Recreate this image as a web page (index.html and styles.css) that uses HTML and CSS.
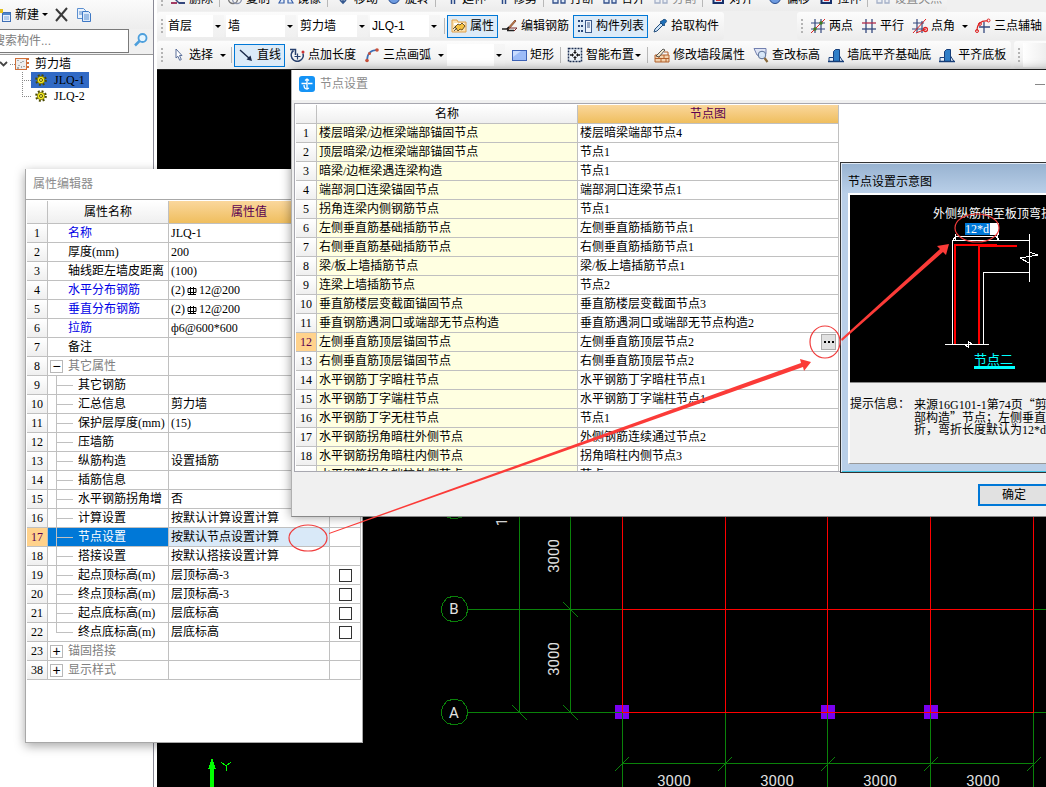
FILE: index.html
```html
<!DOCTYPE html>
<html lang="zh-CN">
<head>
<meta charset="utf-8">
<title>节点设置</title>
<link rel="stylesheet" href="styles.css">
</head>
<body>
<svg class="defs" aria-hidden="true">
  <symbol id="i-props" viewBox="0 0 16 16"><path d="M1 2h5l1 2h8v10H1z" fill="#fbe3b3" stroke="#e0a04a"/><path d="M3 5h10v2H3z" fill="#fff"/><path d="M4 9l3-3 2 1 2-2 3 3-3 4-2-1-2 2z" fill="#f5c242" stroke="#4a3510" stroke-width=".8"/><path d="M2 11l3-3M3 13l3-3" stroke="#333" stroke-width=".8"/></symbol>
  <symbol id="i-editbar" viewBox="0 0 16 16"><path d="M0 11h7M5 12.500h7" stroke="#222" stroke-width="1.400"/><path d="M5 11l8-9 1 1-7 8z" fill="#c98a4a" stroke="#6b2a1a" stroke-width=".7"/><path d="M5 11l2-2" stroke="#111" stroke-width="1.600"/><path d="M8 10h7l-3 3" stroke="#7b2a2a" fill="none"/></symbol>
  <symbol id="i-list" viewBox="0 0 16 16"><rect x="8.500" y="2.500" width="6" height="12" fill="#eef4fb" stroke="#3b5a8c"/><path d="M10 5h3M10 7h3M10 9h3" stroke="#3b5a8c"/><path d="M1 3h2M1 8h2M1 13h2M4 3h2M4 8h2M4 13h2" stroke="#2b4777" stroke-width="2"/></symbol>
  <symbol id="i-pick" viewBox="0 0 16 16"><path d="M2 14l1-3 6-6 2 2-6 6z" fill="#cfe4f7" stroke="#234e7c"/><path d="M8 4l4 4 1-1-1-1c3-2 3-3 2-4s-3-1-4 1L9 3z" fill="#1f6fb8" stroke="#0e3f70" stroke-width=".7"/></symbol>
  <symbol id="i-twopt" viewBox="0 0 16 16"><path d="M5 1v14M11 1v14M1 5h14M1 11h14" stroke="#35497e" stroke-width="1.200"/><path d="M1 15L15 1" stroke="#d22"/><circle cx="5" cy="11" r="1.700" fill="#3f7a1c"/><circle cx="11" cy="5" r="1.700" fill="#3f7a1c"/></symbol>
  <symbol id="i-para" viewBox="0 0 16 16"><path d="M5 1v14M11 1v14" stroke="#35497e" stroke-width="1.300"/><path d="M1 5h14" stroke="#b02a4a" stroke-width="1.300"/><path d="M1 11h14" stroke="#35497e" stroke-width="1.300"/></symbol>
  <symbol id="i-angle" viewBox="0 0 16 16"><path d="M5 1v14M10 3v12M1 5h11M0 11h11" stroke="#35497e" stroke-width="1.200"/><path d="M1 15L14 1M4 15l10-4" stroke="#d22" fill="none"/><circle cx="13.500" cy="11.500" r="2" fill="none" stroke="#d22" stroke-width="1.300"/></symbol>
  <symbol id="i-threeaxis" viewBox="0 0 16 16"><path d="M9 4v11M4 9h11" stroke="#35497e" stroke-width="1.300"/><path d="M2 13C2 6 6 2 13 3" stroke="#d22" fill="none" stroke-width="1.200"/><circle cx="2" cy="13" r="1.500" fill="none" stroke="#d22"/><circle cx="13.500" cy="2.500" r="1.500" fill="none" stroke="#d22"/><circle cx="5" cy="6" r="1.400" fill="none" stroke="#d22"/></symbol>
  <symbol id="i-cursor" viewBox="0 0 16 16"><path d="M6 2l6 6.500H9.500l1.800 4-1.600.8-1.800-4L6 11z" fill="#fff" stroke="#5a6f9a"/></symbol>
  <symbol id="i-line" viewBox="0 0 16 16"><path d="M2 3l10 9" stroke="#1c2b4a" stroke-width="1.400"/><path d="M14 14l-5.500-1.500 4-4z" fill="#1c2b4a"/></symbol>
  <symbol id="i-ptlen" viewBox="0 0 16 16"><path d="M4.500 3.500a6 6 0 1 0 9.500 3" fill="none" stroke="#27406e" stroke-width="1.600"/><path d="M1 2.500h5.500V8" fill="none" stroke="#27406e" stroke-width="1.500"/><path d="M5.500 9.500h6M8.500 6.500v6" stroke="#27406e" stroke-width="1.200"/><circle cx="14" cy="5" r="1.500" fill="#c33"/></symbol>
  <symbol id="i-arc" viewBox="0 0 16 16"><path d="M3 14C3 7 6 3 13 3" fill="none" stroke="#3b6fb5" stroke-width="1.600"/><circle cx="3" cy="13.500" r="1.800" fill="#c8503a"/><circle cx="5.500" cy="6.500" r="1.500" fill="#c8503a"/><circle cx="13" cy="3" r="1.800" fill="#c8503a"/></symbol>
  <symbol id="i-rect" viewBox="0 0 16 16"><rect x="1.500" y="3.500" width="14" height="10" fill="#9dbcf8" stroke="#3d63b8"/><path d="M2 4h8l-8 6z" fill="#c9dcff"/></symbol>
  <symbol id="i-smart" viewBox="0 0 16 16"><rect x="1.500" y="1.500" width="13" height="13" fill="#eef4fb" stroke="#1d2f52" stroke-width="1.500" stroke-dasharray="2 1"/><path d="M8 3v3M8 10v3M3 8h3M10 8h3" stroke="#111" stroke-width="1.300"/><path d="M6 5h4L8 7zM6 11h4L8 9zM5 6v4l2-2zM11 6v4L9 8z" fill="#111"/></symbol>
  <symbol id="i-wall" viewBox="0 0 16 16"><path d="M1 8h14v7H1z" fill="#f5d3ae" stroke="#b4622d"/><path d="M1 11.500h14M5 8v3.500M10 8v3.500M7 11.500V15M12 11.500V15" stroke="#b4622d"/><path d="M2 9l7-7 2 1-6 7z" fill="#f2e8d0" stroke="#333" stroke-width=".8"/><path d="M10 5h4v3" fill="none" stroke="#b4622d"/></symbol>
  <symbol id="i-check" viewBox="0 0 16 16"><path d="M1 1.500h12v5L10 10 4 8z" fill="#dfe5f5" stroke="#7280b0"/><circle cx="9" cy="8" r="3.800" fill="#d7e8f8" fill-opacity=".9" stroke="#5a6f95"/><path d="M11.500 11l3 4" stroke="#8a6a3a" stroke-width="2.200"/></symbol>
  <symbol id="i-base" viewBox="0 0 16 16"><path d="M5.500 4.500l2-2h4v12h-6z" fill="#2f7fc8" stroke="#173f7a"/><path d="M1 10.500h4.500v4H1zM11.500 9l3.500 5.500h-3.500z" fill="#e8f1fb" stroke="#173f7a"/><path d="M0 14.500h16" stroke="#173f7a" stroke-width="1.500"/></symbol>
  <symbol id="i-gear" viewBox="0 0 16 16"><circle cx="8" cy="8" r="6.300" fill="none" stroke="#4b4b00" stroke-width="3" stroke-dasharray="2.500 2.450"/><circle cx="8" cy="8" r="5" fill="#f8ec20" stroke="#4b4b00" stroke-width=".8"/><circle cx="8" cy="8" r="2" fill="#fff76a" stroke="#4b4b00" stroke-width="1.200"/></symbol>
  <symbol id="i-gen" viewBox="0 0 16 16"><path d="M2 4v8h5V4M10 4v8h4V4" fill="#dfe9f7" stroke="#33508a" stroke-width="1.300"/></symbol>
  <symbol id="i-del" viewBox="0 0 16 16"><path d="M1 11h6v2H1z" fill="#a33b62"/><path d="M6 8l3 3h6v2H9L5 9z" fill="#34467c"/></symbol>
  <symbol id="i-round" viewBox="0 0 16 16"><circle cx="8" cy="7" r="5.500" fill="#6e9be0" stroke="#274b8d"/></symbol>
  <symbol id="i-ring" viewBox="0 0 16 16"><circle cx="6" cy="8" r="4.500" fill="none" stroke="#777" stroke-width="1.300"/><circle cx="10" cy="8" r="4.500" fill="none" stroke="#8a93ad" stroke-width="1.300"/></symbol>
  <symbol id="i-mirror" viewBox="0 0 16 16"><path d="M6 3v9H1zM10 3v9h5z" fill="#e7effb" stroke="#3b62aa" stroke-width="1.200"/></symbol>
  <symbol id="i-move" viewBox="0 0 16 16"><path d="M8 2v11M5 9l3 3 3-3" fill="none" stroke="#34588f" stroke-width="1.600"/></symbol>
  <symbol id="i-bars" viewBox="0 0 16 16"><path d="M8.500 2v11M11.500 2v11" stroke="#2a4a88" stroke-width="1.500"/></symbol>
  <symbol id="i-align" viewBox="0 0 16 16"><path d="M3.500 2v10H13V2" fill="#dbe6f6" stroke="#16306b" stroke-width="2"/><path d="M6 9h5" stroke="#c33" stroke-width="2"/></symbol>
</svg>

<div class="app">
  <aside class="side">
    <div class="side-tools">
      <button class="side-btn"><svg class="new-ico" viewBox="0 0 12 16"><rect x="2.500" y="5.500" width="8" height="9" fill="#e5effb" stroke="#3f6fb5"/><path d="M3 6h7v2H3z" fill="#4d85cc"/><path d="M4 10h5M4 12h5" stroke="#7ea6da"/><path d="M0 2h3v4H0z" fill="#e4c21c"/></svg>新建<i class="tri"></i></button>
      <button class="side-btn" aria-label="删除"><svg viewBox="0 0 16 16" class="ico"><path d="M2 2l11 12M13 1L2 14" stroke="#3a3a3a" stroke-width="2"/></svg></button>
      <button class="side-btn" aria-label="复制"><svg viewBox="0 0 16 16" class="ico"><path d="M1.500 1.500h6l2 2v8h-8z" fill="#eaf2fc" stroke="#5b8fd0"/><path d="M6.500 4.500h6l2 2v8h-8z" fill="#dceafb" stroke="#3e78c4"/><path d="M8 8h5M8 10h5M8 12h5M3 5h3M3 7h3" stroke="#5b8fd0"/></svg></button>
    </div>
    <div class="search">
      <input type="text" placeholder="搜索构件..." aria-label="搜索构件">
      <button aria-label="搜索"><svg viewBox="0 0 16 16" class="ico"><circle cx="9.500" cy="6" r="4" fill="#e5f5ff" stroke="#4d9fdc" stroke-width="1.800"/><path d="M6.500 9L2 13.500" stroke="#4d9fdc" stroke-width="2.500"/></svg></button>
    </div>
    <ul class="tree">
      <li class="root"><svg class="root-ico" viewBox="0 0 30 16"><path d="M0 6l3.500 3.500L7 6" fill="none" stroke="#444" stroke-width="1.800"/><path d="M10 8.500h5" stroke="#888" stroke-dasharray="1 1"/><rect x="15.500" y="2.500" width="11" height="11" fill="#eee" stroke="#d0703a"/><path d="M18 4v1M21 6v1M19 9v1M23 5v1M24 10v1M17 12h2M21 11h1" stroke="#666"/><path d="M28 2v12" stroke="#d0703a" stroke-width="2" stroke-dasharray="2 2"/></svg>剪力墙</li>
      <li class="leaf"><span class="leaf-tag on"><svg class="leaf-ico" viewBox="0 0 16 16"><use href="#i-gear"/></svg>JLQ-1</span></li>
      <li class="leaf last"><span class="leaf-tag"><svg class="leaf-ico" viewBox="0 0 16 16"><use href="#i-gear"/></svg>JLQ-2</span></li>
    </ul>
  </aside>

  <main class="main">
    <div class="bars">
      <div class="bar-row cut">
        <div class="bar"><i class="grip"></i>
          <button class="tb"><svg class="ico"><use href="#i-del"/></svg>删除</button><i class="sep"></i>
          <button class="tb"><svg class="ico"><use href="#i-ring"/></svg>复制</button>
          <button class="tb"><svg class="ico"><use href="#i-mirror"/></svg>镜像</button><i class="sep"></i>
          <button class="tb"><svg class="ico"><use href="#i-move"/></svg>移动</button>
          <button class="tb"><svg class="ico"><use href="#i-round"/></svg>旋转</button><i class="sep"></i>
          <button class="tb"><svg class="ico"><use href="#i-bars"/></svg>延伸</button>
          <button class="tb"><svg class="ico"><use href="#i-bars"/></svg>修剪</button><i class="sep"></i>
          <button class="tb"><svg class="ico"><use href="#i-gen"/></svg>打断</button>
          <button class="tb"><svg class="ico"><use href="#i-gen"/></svg>合并</button>
          <button class="tb off"><svg class="ico"><use href="#i-gen"/></svg>分割</button><i class="sep"></i>
          <button class="tb"><svg class="ico"><use href="#i-align"/></svg>对齐</button><i class="sep none"></i>
          <button class="tb"><svg class="ico"><use href="#i-round"/></svg>偏移</button>
          <button class="tb"><svg class="ico"><use href="#i-align"/></svg>拉伸</button><i class="sep"></i>
          <button class="tb off"><svg class="ico"><use href="#i-gen"/></svg>设置夹点</button>
        </div>
      </div>
      <div class="bar-row">
        <div class="bar"><i class="grip"></i>
          <span class="combo small"><select aria-label="楼层"><option>首层</option></select></span>
          <span class="combo"><select aria-label="构件类型"><option>墙</option></select></span>
          <span class="combo"><select aria-label="构件"><option>剪力墙</option></select></span>
          <span class="combo"><select aria-label="构件名称"><option>JLQ-1</option></select></span>
          <i class="sep"></i>
          <button class="tb on"><svg class="ico"><use href="#i-props"/></svg>属性</button>
          <button class="tb"><svg class="ico"><use href="#i-editbar"/></svg>编辑钢筋</button>
          <button class="tb on"><svg class="ico"><use href="#i-list"/></svg>构件列表</button>
          <button class="tb"><svg class="ico"><use href="#i-pick"/></svg>拾取构件</button>
        </div>
        <div class="bar axis"><i class="grip"></i>
          <button class="tb"><svg class="ico"><use href="#i-twopt"/></svg>两点</button>
          <button class="tb"><svg class="ico"><use href="#i-para"/></svg>平行</button>
          <button class="tb"><svg class="ico"><use href="#i-angle"/></svg>点角</button><i class="drop"></i>
          <button class="tb"><svg class="ico"><use href="#i-threeaxis"/></svg>三点辅轴</button>
        </div>
      </div>
      <div class="bar-row">
        <div class="bar"><i class="grip"></i>
          <button class="tb"><svg class="ico"><use href="#i-cursor"/></svg>选择</button><i class="drop"></i><i class="sep"></i>
          <button class="tb on"><svg class="ico"><use href="#i-line"/></svg>直线</button>
          <button class="tb"><svg class="ico"><use href="#i-ptlen"/></svg>点加长度</button>
          <button class="tb"><svg class="ico"><use href="#i-arc"/></svg>三点画弧</button><i class="drop"></i>
          <span class="combo small"><select aria-label="画弧方式"><option></option></select></span>
          <button class="tb"><svg class="ico"><use href="#i-rect"/></svg>矩形</button><i class="sep"></i>
          <button class="tb"><svg class="ico"><use href="#i-smart"/></svg>智能布置<i class="tri"></i></button><i class="sep"></i>
          <button class="tb"><svg class="ico"><use href="#i-wall"/></svg>修改墙段属性</button>
          <button class="tb"><svg class="ico"><use href="#i-check"/></svg>查改标高</button>
          <button class="tb"><svg class="ico"><use href="#i-base"/></svg>墙底平齐基础底</button>
          <button class="tb"><svg class="ico"><use href="#i-base"/></svg>平齐底板</button>
        </div>
        <div class="bar tail"><i class="grip"></i><span class="blank"></span></div>
      </div>
    </div>
    <svg class="cad" role="img" aria-label="轴网平面">
      <g transform="translate(-157 -70)" shape-rendering="crispEdges" fill="none">
        <g fill="#7a00f0"><rect x="615" y="705" width="14" height="14"/><rect x="821" y="705" width="14" height="14"/><rect x="924" y="705" width="14" height="14"/></g>
        <g stroke="#0a820a">
          <path d="M519.500 500V712M570.500 500V712M467 609.500H622M467 712.500H622M1033 609.500H1200M1033 712.500H1200"/>
          <path d="M622.500 712V900M725.500 712V900M827.500 712V900M930.500 712V900M1033.500 712V900M622 763.500H1034"/>
          <path d="M563 602l15 15M563 705l15 15M512 705l15 15M615 771l14-14M718 771l14-14M821 771l14-14M924 771l14-14M1027 771l14-14"/>
          <path id="bub" d="M454 596l8 2 4 5 2 6-2 7-4 4-8 2-7-2-4-4-2-7 2-6 4-5z"/>
          <use href="#bub" y="103"/><use href="#bub" y="-103"/>
        </g>
        <path stroke="#f00" d="M622.500 500V712M725.500 500V712M827.500 500V712M930.500 500V712M1033.500 500V712M622 609.500H1034M622 712.500H1034"/>
        <path d="M212 758l4 11h-2v131h-4V769h-2z" fill="#0f0"/>
        <path d="M221 762l5 4 5-4M226 766v5" stroke="#0f0"/>
        <g class="cad-text">
          <text x="454" y="614">B</text><text x="454" y="718">A</text>
          <text x="674" y="786">3000</text><text x="777" y="786">3000</text><text x="880" y="786">3000</text><text x="983" y="786">3000</text>
          <text transform="translate(559 556) rotate(-90)">3000</text>
          <text transform="translate(559 659) rotate(-90)">3000</text>
          <text transform="translate(507 522) rotate(-90)">1</text>
        </g>
      </g>
    </svg>
  </main>

  <section class="win props">
    <h2 class="win-title">属性编辑器</h2>
    <div class="props-body">
      <table class="grid">
        <colgroup><col class="c-no"><col class="c-name"><col class="c-val"><col class="c-chk"></colgroup>
        <thead><tr><th></th><th>属性名称</th><th class="hot">属性值</th><th></th></tr></thead>
        <tbody>
          <tr><th>1</th><td class="n link">名称</td><td>JLQ-1</td><td></td></tr>
          <tr><th>2</th><td class="n">厚度(mm)</td><td>200</td><td></td></tr>
          <tr><th>3</th><td class="n">轴线距左墙皮距离</td><td>(100)</td><td></td></tr>
          <tr><th>4</th><td class="n link">水平分布钢筋</td><td>(2)<svg class="rebar" viewBox="0 0 12 12"><path d="M2 3.500h8v4H2zM4.500 2v8M7.500 2v8M2 9.500h8" fill="none" stroke="#000"/></svg>12@200</td><td></td></tr>
          <tr><th>5</th><td class="n link">垂直分布钢筋</td><td>(2)<svg class="rebar" viewBox="0 0 12 12"><path d="M2 3.500h8v4H2zM4.500 2v8M7.500 2v8M2 9.500h8" fill="none" stroke="#000"/></svg>12@200</td><td></td></tr>
          <tr><th>6</th><td class="n link">拉筋</td><td>ф6@600*600</td><td></td></tr>
          <tr><th>7</th><td class="n">备注</td><td></td><td></td></tr>
          <tr><th>8</th><td class="n group"><button class="exp" aria-label="折叠">−</button>其它属性</td><td></td><td></td></tr>
          <tr><th>9</th><td class="n sub">其它钢筋</td><td></td><td></td></tr>
          <tr><th>10</th><td class="n sub">汇总信息</td><td>剪力墙</td><td></td></tr>
          <tr><th>11</th><td class="n sub">保护层厚度(mm)</td><td>(15)</td><td></td></tr>
          <tr><th>12</th><td class="n sub">压墙筋</td><td></td><td></td></tr>
          <tr><th>13</th><td class="n sub">纵筋构造</td><td>设置插筋</td><td></td></tr>
          <tr><th>14</th><td class="n sub">插筋信息</td><td></td><td></td></tr>
          <tr><th>15</th><td class="n sub">水平钢筋拐角增</td><td>否</td><td></td></tr>
          <tr><th>16</th><td class="n sub">计算设置</td><td>按默认计算设置计算</td><td></td></tr>
          <tr class="sel"><th>17</th><td class="n sub">节点设置</td><td>按默认节点设置计算</td><td></td></tr>
          <tr><th>18</th><td class="n sub">搭接设置</td><td>按默认搭接设置计算</td><td></td></tr>
          <tr><th>19</th><td class="n sub">起点顶标高(m)</td><td>层顶标高-3</td><td class="chk"><input type="checkbox" aria-label="起点顶标高"></td></tr>
          <tr><th>20</th><td class="n sub">终点顶标高(m)</td><td>层顶标高-3</td><td class="chk"><input type="checkbox" aria-label="终点顶标高"></td></tr>
          <tr><th>21</th><td class="n sub">起点底标高(m)</td><td>层底标高</td><td class="chk"><input type="checkbox" aria-label="起点底标高"></td></tr>
          <tr><th>22</th><td class="n sub end">终点底标高(m)</td><td>层底标高</td><td class="chk"><input type="checkbox" aria-label="终点底标高"></td></tr>
          <tr><th>23</th><td class="n group"><button class="exp" aria-label="展开">+</button>锚固搭接</td><td></td><td></td></tr>
          <tr><th>38</th><td class="n group"><button class="exp" aria-label="展开">+</button>显示样式</td><td></td><td></td></tr>
        </tbody>
      </table>
    </div>
  </section>

  <section class="win dialog">
    <header class="dialog-head">
      <svg class="ico" viewBox="0 0 16 16"><rect width="16" height="16" rx="3" fill="#1593f5"/><path d="M2.500 7.500h5M9 7.500h4.500M8 3v10M6 4.500L8 3l2 1.500M5 9c0 3 1.500 4 3 4l2-1" fill="none" stroke="#fff" stroke-width="1.300"/></svg>
      <h2 class="win-title">节点设置</h2>
      <button class="min" aria-label="最小化"></button>
    </header>
    <div class="dialog-body">
      <div class="nodes">
        <table class="grid">
          <colgroup><col class="c-no"><col class="c-half"><col class="c-half"></colgroup>
          <thead><tr><th></th><th>名称</th><th class="hot">节点图</th></tr></thead>
          <tbody>
            <tr><th>1</th><td class="y">楼层暗梁/边框梁端部锚固节点</td><td>楼层暗梁端部节点4</td></tr>
            <tr><th>2</th><td class="y">顶层暗梁/边框梁端部锚固节点</td><td>节点1</td></tr>
            <tr><th>3</th><td class="y">暗梁/边框梁遇连梁构造</td><td>节点1</td></tr>
            <tr><th>4</th><td class="y">端部洞口连梁锚固节点</td><td>端部洞口连梁节点1</td></tr>
            <tr><th>5</th><td class="y">拐角连梁内侧钢筋节点</td><td>节点1</td></tr>
            <tr><th>6</th><td class="y">左侧垂直筋基础插筋节点</td><td>左侧垂直筋插筋节点1</td></tr>
            <tr><th>7</th><td class="y">右侧垂直筋基础插筋节点</td><td>右侧垂直筋插筋节点1</td></tr>
            <tr><th>8</th><td class="y">梁/板上墙插筋节点</td><td>梁/板上墙插筋节点1</td></tr>
            <tr><th>9</th><td class="y">连梁上墙插筋节点</td><td>节点2</td></tr>
            <tr><th>10</th><td class="y">垂直筋楼层变截面锚固节点</td><td>垂直筋楼层变截面节点3</td></tr>
            <tr><th>11</th><td class="y">垂直钢筋遇洞口或端部无节点构造</td><td>垂直筋遇洞口或端部无节点构造2</td></tr>
            <tr class="cur"><th>12</th><td class="y">左侧垂直筋顶层锚固节点</td><td><div class="pick">左侧垂直筋顶层节点2<button class="more" aria-label="选择节点图"><i></i><i></i><i></i></button></div></td></tr>
            <tr><th>13</th><td class="y">右侧垂直筋顶层锚固节点</td><td>右侧垂直筋顶层节点2</td></tr>
            <tr><th>14</th><td class="y">水平钢筋丁字暗柱节点</td><td>水平钢筋丁字暗柱节点1</td></tr>
            <tr><th>15</th><td class="y">水平钢筋丁字端柱节点</td><td>水平钢筋丁字端柱节点1</td></tr>
            <tr><th>16</th><td class="y">水平钢筋丁字无柱节点</td><td>节点1</td></tr>
            <tr><th>17</th><td class="y">水平钢筋拐角暗柱外侧节点</td><td>外侧钢筋连续通过节点2</td></tr>
            <tr><th>18</th><td class="y">水平钢筋拐角暗柱内侧节点</td><td>拐角暗柱内侧节点3</td></tr>
            <tr><th></th><td class="y">水平钢筋拐角端柱外侧节点</td><td>节点3</td></tr>
          </tbody>
        </table>
      </div>
      <footer class="dialog-foot"><button class="ok">确定</button></footer>
    </div>

    <section class="preview">
      <h3 class="preview-title">节点设置示意图</h3>
      <div class="preview-in">
        <div class="draw">
          <svg class="draw-svg" role="img" aria-label="节点二">
            <g transform="translate(-850 -195)" fill="none" stroke="#fff" shape-rendering="crispEdges">
              <path d="M952.500 344V240.500H1029.500M1029.500 234v48M983.500 344V272.500H1029M945 344.500h44M955.500 234v6M997.500 234v6M955 236.500h42M953 240l3-4M999 240l-3-4"/>
              <path d="M1029 252l9 3-18 3 9 5M964 344l4 3v-6l4 3"/>
              <path d="M955 344V245H997M979 344V246H1017" stroke="#f00" stroke-width="2"/>
              <path d="M974 367.500h41" stroke="#0ff" stroke-width="3"/>
              <text class="draw-cap" x="933" y="218">外侧纵筋伸至板顶弯折</text>
              <text class="draw-name" x="974" y="364">节点二</text>
            </g>
          </svg>
          <input class="len" type="text" value="12*d" aria-label="弯折长度">
        </div>
        <dl class="tip"><dt>提示信息：</dt><dd>来源16G101-1第74页<span class="wide">“</span>剪<br>部构造<span class="wide">”</span>节点；左侧垂直<br>折，弯折长度默认为12*d</dd></dl>
      </div>
    </section>
  </section>

  <svg class="marks" aria-hidden="true">
    <g fill="none" stroke="#f03c3c" stroke-width="1.200"><ellipse cx="308" cy="538" rx="19" ry="13"/><ellipse cx="825" cy="342" rx="15" ry="16"/><ellipse cx="977" cy="228" rx="22" ry="14"/></g>
    <path fill="#fb3b38" d="M329 533L801 363l-1-4 11 3-7 9-1-4L329 534z"/>
    <path fill="#fb3b38" d="M841 339L940 249l-3-3 12-2-3 11-3-3L842 341z"/>
  </svg>
</div>
</body>
</html>
```
FILE: styles.css
```css
* { box-sizing: border-box; }

body {
  margin: 0;
  font: 12px/16px "Liberation Sans", "Noto Sans CJK SC", sans-serif;
  color: #000;
}

button, input, select {
  margin: 0;
  padding: 0;
  border: 0;
  background: none;
  font: inherit;
  color: inherit;
}

h2, h3, ul, dl, dd { margin: 0; padding: 0; }

.defs { position: absolute; width: 0; height: 0; }
.ico { width: 16px; height: 16px; flex: none; }

.app {
  position: relative;
  display: flex;
  height: 100vh;
  overflow: hidden;
  background: #fff;
}

/* component list */
.side {
  display: flex;
  flex-direction: column;
  flex: none;
  width: 154px;
  border-right: 1px solid #8a8a96;
}

.side-tools {
  display: flex;
  align-items: center;
  gap: 6px;
  height: 29px;
  background: linear-gradient(#fbfbfb, #ededed);
}

.side-btn { display: flex; align-items: center; gap: 3px; }
.new-ico { width: 12px; height: 16px; }

.tri {
  width: 0;
  height: 0;
  border: 3px solid transparent;
  border-top-color: #000;
  border-bottom: 0;
}

.search { display: flex; height: 25px; background: #f0f0f0; }

.search input {
  width: 137px;
  height: 24px;
  margin-left: -8px;
  border: 1px solid #7a7a7a;
  background: #fff;
  outline: 0;
}

.search input::placeholder { color: #808080; opacity: 1; }
.search button { padding: 0 4px; }

.tree {
  flex: 1;
  padding-top: 1px;
  border-top: 1px solid #999;
  background: #fff;
  list-style: none;
}

.tree li { display: flex; height: 16px; }
.root-ico { width: 30px; height: 16px; margin-right: 5px; }

.leaf {
  position: relative;
  padding-left: 31px;
  font-family: "Liberation Serif", "Noto Sans CJK SC", serif;
}

.leaf::before {
  content: "";
  position: absolute;
  left: 22px;
  top: 0;
  width: 8px;
  height: 8px;
  border: 1px dotted #888;
  border-width: 0 0 1px 1px;
}

.leaf.last::before { top: -8px; height: 16px; }
.leaf-tag { display: flex; align-items: center; gap: 7px; padding: 0 4px; }
.leaf-tag.on { background: #316ac5; }
.leaf-ico { width: 12px; height: 12px; }

/* toolbars */
.main {
  display: flex;
  flex-direction: column;
  flex: 1;
  min-width: 0;
  margin-left: 3px;
}

.bars { background: #f0f0f0; border-bottom: 1px solid #222; }

.bar-row {
  display: flex;
  gap: 3px;
  height: 29px;
  overflow: hidden;
  white-space: nowrap;
}

.bar-row:last-child { height: 28px; }
.bar-row.cut { height: 12px; padding-bottom: 1px; align-items: flex-end; }

.bar {
  display: flex;
  flex: none;
  align-items: center;
  height: 28px;
  padding: 0 1px 0 4px;
  border-radius: 3px;
  background: linear-gradient(#fcfcfc, #ececec);
}

.cut .bar { height: 24px; }
.axis { margin-left: 70px; }

.grip {
  width: 2px;
  height: 15px;
  margin-right: 3px;
  background: repeating-linear-gradient(#b4b4b4 0 2px, transparent 2px 4px);
}

.sep {
  width: 1px;
  height: 16px;
  margin: 0 2px;
  background: #b8b8b8;
}

.cut .sep { margin: 0 3px 0 2px; }
.sep.none { background: none; }

.tb {
  display: flex;
  align-items: center;
  gap: 3px;
  height: 23px;
  padding: 0 3px;
  border: 1px solid transparent;
}

.tb .tri { margin-left: -2px; }
.tb.on { border-color: #0078d7; background: #dcebf8; }
.tb.off { color: #8a8a8a; }
.tb.off .ico { opacity: 0.4; }

.drop { display: flex; justify-content: center; width: 12px; }
.drop::before {
  content: "";
  border: 3px solid transparent;
  border-top-color: #000;
  border-bottom: 0;
}

.combo { position: relative; width: 70px; height: 22px; margin-right: 2px; background: #fff; }
.combo.small { width: 58px; }

.combo select {
  width: 100%;
  height: 100%;
  padding: 0 2px;
  appearance: none;
  background: linear-gradient(#f6f6f6, #f0f0f0) right / 11px 100% no-repeat;
}

.combo::after {
  content: "";
  position: absolute;
  right: 3px;
  top: 10px;
  border: 3px solid transparent;
  border-top-color: #000;
  border-bottom: 0;
}

.blank { width: 24px; height: 24px; background: linear-gradient(90deg, #fff, #eee); }

/* drawing area */
.cad { flex: 1; width: 100%; min-height: 0; background: #000; }

.cad-text {
  fill: #e2e2e2;
  font: 15px Roboto, sans-serif;
  text-anchor: middle;
}

/* floating windows */
.win { position: absolute; background: #fff; }
.win-title { font-size: 12px; font-weight: 400; color: #8c8c8c; }

.grid {
  table-layout: fixed;
  border-collapse: separate;
  border-spacing: 0;
  font: 12px/18px "Liberation Serif", "Noto Sans CJK SC", serif;
}

.grid th, .grid td {
  height: 19px;
  padding: 0 2px;
  border: 1px solid #c0c0c0;
  border-width: 0 1px 1px 0;
  overflow: hidden;
  white-space: nowrap;
  text-align: left;
  font-weight: 400;
}

.grid th {
  padding: 0;
  text-align: center;
  background: linear-gradient(#fff, #efefef);
}

.grid th.hot { color: #5a0050; background: linear-gradient(#fad79c, #efbe5e); }
.c-no { width: 21px; }

.props {
  left: 25px;
  top: 169px;
  width: 338px;
  height: 574px;
  border: 1px solid #a8a8a8;
  border-top: 0;
  box-shadow: 0 3px 10px rgba(0, 0, 0, 0.35);
}

.props .win-title { height: 30px; padding: 7px; }
.props-body { padding: 1px 0 0 1px; border-top: 1px solid #a8a8a8; }
.props .grid { width: 334px; }
.props thead th { height: 23px; }
.c-name { width: 121px; }
.c-val { width: 161px; }

.grid .n { position: relative; padding-left: 20px; }
.grid .link { color: #0000e6; }
.grid .group { color: #808080; }
.grid .n.sub { padding-left: 30px; }

.sub::before, .sub::after {
  content: "";
  position: absolute;
  left: 8px;
  top: 0;
  background: #c0c0c0;
}

.sub::before { width: 1px; height: 19px; }
.sub::after { top: 9px; width: 17px; height: 1px; }
.sub.end::before { height: 9px; }

.exp {
  position: absolute;
  left: 2px;
  top: 3px;
  width: 13px;
  height: 13px;
  border: 1px solid #b8b8b8;
  font: 14px/11px "Liberation Sans", sans-serif;
  color: #000;
}

.grid .sel th, .grid .cur th { color: #5a0050; background: #ffd28c; }
.grid .sel td { background: #d9e9f8; }
.grid .sel .n { color: #fff; background: #0078d7; }
.grid .sel td:last-child { background: #fff; }

.grid .chk { padding: 0; text-align: center; line-height: 0; }
.chk input { width: 13px; height: 13px; border: 1px solid #333; appearance: none; }
.rebar { width: 12px; height: 12px; margin: 0 1px; vertical-align: -3px; }

.dialog {
  left: 291px;
  right: -60px;
  top: 70px;
  border-bottom: 1px solid #888;
  border-left: 1px solid #b0b0b0;
  background: #f0f0f0;
  box-shadow: 0 0 10px rgba(0, 0, 0, 0.4);
}

.dialog-head {
  display: flex;
  align-items: center;
  gap: 5px;
  height: 30px;
  padding: 0 61px 2px 7px;
  background: #fff;
}

.min { width: 10px; height: 1px; margin-left: auto; background: #888; }
.dialog-body { padding: 3px 0 0 2px; }

.nodes {
  height: 369px;
  padding: 1px 0 0 1px;
  border: 1px solid #a8a8b0;
  background: #fff;
  overflow: hidden;
}

.nodes .grid { width: 543px; }
.c-half { width: 261px; }
.grid .y { background: #ffffe1; }
.pick { display: flex; justify-content: space-between; height: 18px; }

.more {
  display: flex;
  align-items: center;
  justify-content: center;
  gap: 2px;
  width: 15px;
  height: 16px;
  margin-top: 1px;
  border: 1px solid #adadad;
  background: #e1e1e1;
}

.more i { width: 2px; height: 2px; background: #000; }

.dialog-foot { display: flex; justify-content: flex-end; padding: 12px 56px 10px; }
.ok { width: 72px; height: 22px; border: 2px solid #0078d7; background: #e1e1e1; }

.preview {
  position: absolute;
  left: 548px;
  right: 0;
  top: 92px;
  padding: 1px 1px 8px 7px;
  border: 1px solid #333;
  box-shadow: inset 1px 1px #dfe9f5, inset 0 -1px #3fc4e4;
  background: linear-gradient(#97b2d0, #b9cfe8 30px);
}

.preview-title { height: 29px; line-height: 36px; font-size: 12px; font-weight: 400; }
.preview-in { border: 1px solid #fff; border-width: 2px 0 1px 2px; border-bottom-color: #999; background: #f0f0f0; }
.draw { position: relative; height: 188px; border-bottom: 1px solid #888; background: #000; }
.draw-svg { display: block; width: 100%; height: 187px; }
.draw-cap, .draw-name { stroke: none; fill: #fff; font: 12px "Noto Sans CJK SC", sans-serif; }
.draw-name { fill: #0ff; font-size: 13px; }

.len {
  position: absolute;
  left: 115px;
  top: 28px;
  width: 34px;
  height: 12px;
  color: #fff;
  background: linear-gradient(90deg, #0078d7 25px, #fff 25px);
  font: 12px/12px "Liberation Serif", serif;
}

.tip {
  display: flex;
  gap: 4px;
  height: 80px;
  padding-top: 15px;
  font: 12px/12px "Liberation Serif", "Noto Sans CJK SC", serif;
  white-space: nowrap;
}

.tip dt { width: 60px; }
.wide { font-family: "Noto Sans CJK SC", sans-serif; }

.marks {
  position: absolute;
  inset: 0;
  width: 100%;
  height: 100%;
  pointer-events: none;
}
```
